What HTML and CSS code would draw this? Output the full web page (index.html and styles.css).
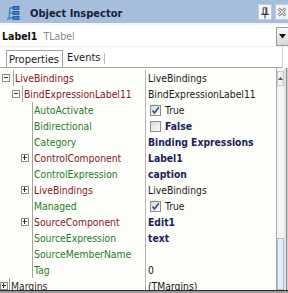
FILE: index.html
```html
<!DOCTYPE html>
<html>
<head>
<meta charset="utf-8">
<link rel="stylesheet" href="styles.css">
</head>
<body>
<div class="win">
  <div class="titlebar">
    <svg class="ticon" width="16" height="16" viewBox="0 0 16 16">
      <path d="M2 14 L4 14 L5 3 L7 3" fill="none" stroke="#1f8fb0" stroke-width="1.4"/>
      <path d="M5 8 L7 8" fill="none" stroke="#1f8fb0" stroke-width="1.2"/>
      <rect x="8" y="1.5" width="6" height="3" fill="#3b7fd0" stroke="#1d4f9a" stroke-width="0.8"/>
      <rect x="8" y="6.5" width="6" height="3" fill="#3b7fd0" stroke="#1d4f9a" stroke-width="0.8"/>
      <rect x="8" y="11.5" width="6" height="3" fill="#3b7fd0" stroke="#1d4f9a" stroke-width="0.8"/>
      <path d="M7 3 L8 3 M7 8 L8 8 M5 13 L8 13" stroke="#1d4f9a" stroke-width="1"/>
    </svg>
    <span class="title">Object Inspector</span>
    <span class="tbtn pin">
      <svg width="13" height="16" viewBox="0 0 13 16">
        <path d="M4.5 3.5 H8.5 V10.5 H4.5 Z" fill="#fff" stroke="#222" stroke-width="1"/>
        <path d="M7.5 4 V10" stroke="#222" stroke-width="1"/>
        <path d="M2 10.5 H11" stroke="#222" stroke-width="1"/>
        <path d="M6.5 11 V15" stroke="#222" stroke-width="1"/>
      </svg>
    </span>
    <span class="tbtn close">
      <svg width="14" height="16" viewBox="0 0 14 16">
        <path d="M3 4 L11 12 M11 4 L3 12" stroke="#6d6d6d" stroke-width="3.2"/>
        <path d="M3 4 L11 12 M11 4 L3 12" stroke="#fafafa" stroke-width="1.4"/>
      </svg>
    </span>
  </div>
  <div class="selector">
    <span class="objname">Label1</span><span class="objtype">TLabel</span>
    <span class="dropbtn">
      <svg width="8" height="5" viewBox="0 0 8 5"><path d="M0 0 H7 L3.5 4.5 Z" fill="#111"/></svg>
    </span>
  </div>
  <div class="tabs">
    <span class="tab active">Properties</span><span class="tab">Events</span>
  </div>
  <div class="body">
    <div class="grid">
      <div class="row">
        <div class="name l0"><span class="exp minus"></span><span class="lbl ref">LiveBindings</span></div>
        <div class="val">LiveBindings</div>
      </div>
      <div class="row">
        <div class="name l1"><span class="exp minus"></span><span class="lbl ref">BindExpressionLabel11</span></div>
        <div class="val">BindExpressionLabel11</div>
      </div>
      <div class="row">
        <div class="name l2"><span class="exp none"></span><span class="lbl grn">AutoActivate</span></div>
        <div class="val"><span class="chk on"><svg width="9" height="9" viewBox="0 0 9 9"><path d="M1.5 4.5 L3.5 7 L7.8 1.2" fill="none" stroke="#2d4f8e" stroke-width="1.6"/></svg></span>True</div>
      </div>
      <div class="row">
        <div class="name l2"><span class="exp none"></span><span class="lbl grn">Bidirectional</span></div>
        <div class="val b"><span class="chk"></span>False</div>
      </div>
      <div class="row">
        <div class="name l2"><span class="exp none"></span><span class="lbl grn">Category</span></div>
        <div class="val b">Binding Expressions</div>
      </div>
      <div class="row">
        <div class="name l2"><span class="exp plus"></span><span class="lbl ref">ControlComponent</span></div>
        <div class="val b">Label1</div>
      </div>
      <div class="row">
        <div class="name l2"><span class="exp none"></span><span class="lbl grn">ControlExpression</span></div>
        <div class="val b">caption</div>
      </div>
      <div class="row">
        <div class="name l2"><span class="exp plus"></span><span class="lbl ref">LiveBindings</span></div>
        <div class="val">LiveBindings</div>
      </div>
      <div class="row">
        <div class="name l2"><span class="exp none"></span><span class="lbl grn">Managed</span></div>
        <div class="val"><span class="chk on"><svg width="9" height="9" viewBox="0 0 9 9"><path d="M1.5 4.5 L3.5 7 L7.8 1.2" fill="none" stroke="#2d4f8e" stroke-width="1.6"/></svg></span>True</div>
      </div>
      <div class="row">
        <div class="name l2"><span class="exp plus"></span><span class="lbl ref">SourceComponent</span></div>
        <div class="val b">Edit1</div>
      </div>
      <div class="row">
        <div class="name l2"><span class="exp none"></span><span class="lbl grn">SourceExpression</span></div>
        <div class="val b">text</div>
      </div>
      <div class="row">
        <div class="name l2"><span class="exp none"></span><span class="lbl grn">SourceMemberName</span></div>
        <div class="val"></div>
      </div>
      <div class="row">
        <div class="name l2"><span class="exp none"></span><span class="lbl grn">Tag</span></div>
        <div class="val">0</div>
      </div>
      <div class="row">
        <div class="name lm"><span class="exp plus"></span><span class="lbl dark">Margins</span></div>
        <div class="val">(TMargins)</div>
      </div>
    </div>
    <div class="vscroll">
      <div class="sbtn"><svg width="5" height="3" viewBox="0 0 5 3"><path d="M0 3 L2.5 0 L5 3 Z" fill="#555"/></svg></div>
      <div class="track"><div class="thumb"></div></div>
    </div>
    <div class="frame"></div>
  </div>
  <div class="bottom"></div>
</div>
</body>
</html>
```
FILE: styles.css
```css
html, body {
  margin: 0;
  padding: 0;
  width: 288px;
  height: 293px;
  overflow: hidden;
  background: #fff;
}
.win {
  width: 288px;
  height: 293px;
  display: flex;
  flex-direction: column;
  font-family: "DejaVu Sans Condensed", "DejaVu Sans", sans-serif;
  font-stretch: condensed;
  font-size: 10.3px;
  color: #1a1a1a;
  overflow: hidden;
}
.titlebar {
  height: 23px;
  flex: none;
  background: #a6bedb;
  display: flex;
  align-items: center;
  border-bottom: 2px solid #f4f6f9;
}
.ticon {
  margin-left: 5px;
  margin-top: 2px;
  flex: none;
}
.title {
  margin-left: 9px;
  padding-top: 3px;
  font-weight: bold;
  font-size: 11px;
  color: #16203a;
  flex: 1;
}
.tbtn {
  flex: none;
  height: 16px;
  display: flex;
  align-items: center;
  justify-content: center;
  box-sizing: border-box;
  margin-top: 1px;
}
.pin {
  width: 14px;
  background: #f6f7f9;
  border: 1px solid #c4ccd8;
  margin-right: 3px;
}
.close {
  width: 14px;
  background: #f2f4f7;
  border: 1px solid #c4ccd8;
  margin-right: -1px;
}
.selector {
  height: 21px;
  flex: none;
  display: flex;
  align-items: center;
  background: #fff;
  border-bottom: 1px solid #eeeeee;
}
.objname {
  margin-left: 2px;
  font-weight: bold;
  font-size: 10.5px;
  color: #111;
}
.objtype {
  margin-left: 6px;
  font-size: 10.5px;
  color: #8a8a8a;
  flex: 1;
}
.dropbtn {
  width: 12px;
  height: 19px;
  box-sizing: border-box;
  border: 1px solid #9a9a9a;
  border-right: none;
  background: linear-gradient(#fafafa, #d9d9d9);
  display: flex;
  align-items: center;
  justify-content: center;
  margin-top: 1px;
}
.tabs {
  height: 20px;
  flex: none;
  display: flex;
  align-items: flex-end;
  padding-left: 6px;
  margin-right: 5px;
  border-bottom: 1px solid #a8a8a8;
  border-right: 1px solid #d0d0d0;
  background: #fff;
}
.tab {
  font-size: 11px;
  height: 17px;
  line-height: 17px;
  box-sizing: border-box;
  color: #1a1a1a;
}
.tab.active {
  border: 1px solid #a0a0a0;
  border-bottom: none;
  padding: 0 3px 0 2px;
  background: #fff;
}
.tab:not(.active) {
  padding: 0 4px 0 4px;
  border-right: 1px solid #b8b8b8;
  height: 11px;
  line-height: 10px;
  margin-bottom: 3px;
}
.body {
  flex: 1;
  min-height: 0;
  display: flex;
  overflow: hidden;
  background: #fdfdf9;
}
.grid {
  width: 276px;
  flex: none;
  padding-top: 2px;
}
.row {
  display: grid;
  grid-template-columns: 145px 1fr;
  height: 16px;
}
.name {
  display: flex;
  align-items: center;
  height: 16px;
  white-space: nowrap;
  overflow: hidden;
}
.name.l0 { padding-left: 2px; }
.name.l0 .exp { margin-right: 3px; }
.name.l1 { padding-left: 12px; }
.name.l1 .exp { margin-right: 2px; }
.name.l2 { padding-left: 21px; }
.name.l2 .exp { margin-right: 3px; }
.name.lm { padding-left: 0; }
.name.lm .exp { margin-right: 1px; }
.exp {
  width: 8px;
  height: 8px;
  box-sizing: border-box;
  border: 1px solid #8c8c8c;
  background: #fff;
  flex: none;
  position: relative;
}
.exp.none {
  border-color: transparent;
  background: transparent;
}
.exp.minus::before,
.exp.plus::before {
  content: "";
  position: absolute;
  left: 1px;
  top: 2px;
  width: 4px;
  height: 1px;
  background: #333;
}
.exp.plus::after {
  content: "";
  position: absolute;
  left: 2px;
  top: 0;
  width: 1px;
  height: 5px;
  background: #333;
}
.lbl {
  height: 16px;
  line-height: 16px;
  border-left: 1px solid #a4a4a4;
  padding-left: 1px;
}
.ref { color: #86152a; }
.grn { color: #1f7d1f; }
.dark { color: #3a2a2a; }
.val {
  border-left: 1px solid #b4b4b4;
  padding-left: 2px;
  height: 16px;
  line-height: 16px;
  display: flex;
  align-items: center;
  white-space: nowrap;
  overflow: hidden;
}
.val.b {
  font-weight: bold;
  color: #1b1d5a;
}
.chk {
  width: 11px;
  height: 11px;
  box-sizing: border-box;
  border: 1px solid #8e8e8e;
  background: linear-gradient(135deg, #d8d8d8, #fbfbfb);
  margin-left: 2px;
  margin-right: 4px;
  flex: none;
  display: flex;
  align-items: center;
  justify-content: center;
}
.vscroll {
  width: 7px;
  flex: none;
  border-left: 1px solid #a8a8a8;
  display: flex;
  flex-direction: column;
  background: #f4f4f4;
}
.sbtn {
  height: 15px;
  margin-top: 3px;
  box-sizing: border-box;
  border: 1px solid #c8c8c8;
  background: linear-gradient(90deg, #f8f8f8, #e6e6e6);
  display: flex;
  justify-content: flex-end;
  align-items: center;
}
.track {
  flex: 1;
  display: flex;
  flex-direction: column;
  justify-content: flex-end;
}
.thumb {
  height: 52px;
  box-sizing: border-box;
  border: 1px solid #a9bccf;
  background: #dfeef9;
}
.frame {
  flex: 1;
  background: linear-gradient(90deg, #e4e4e4 0 2px, #8a8a8a 2px 3px, #cfcfcf 3px);
}
.bottom {
  height: 3px;
  flex: none;
  border-top: 1px solid #2a2a2a;
  background: #9a9a9a;
  box-sizing: border-box;
}
```
